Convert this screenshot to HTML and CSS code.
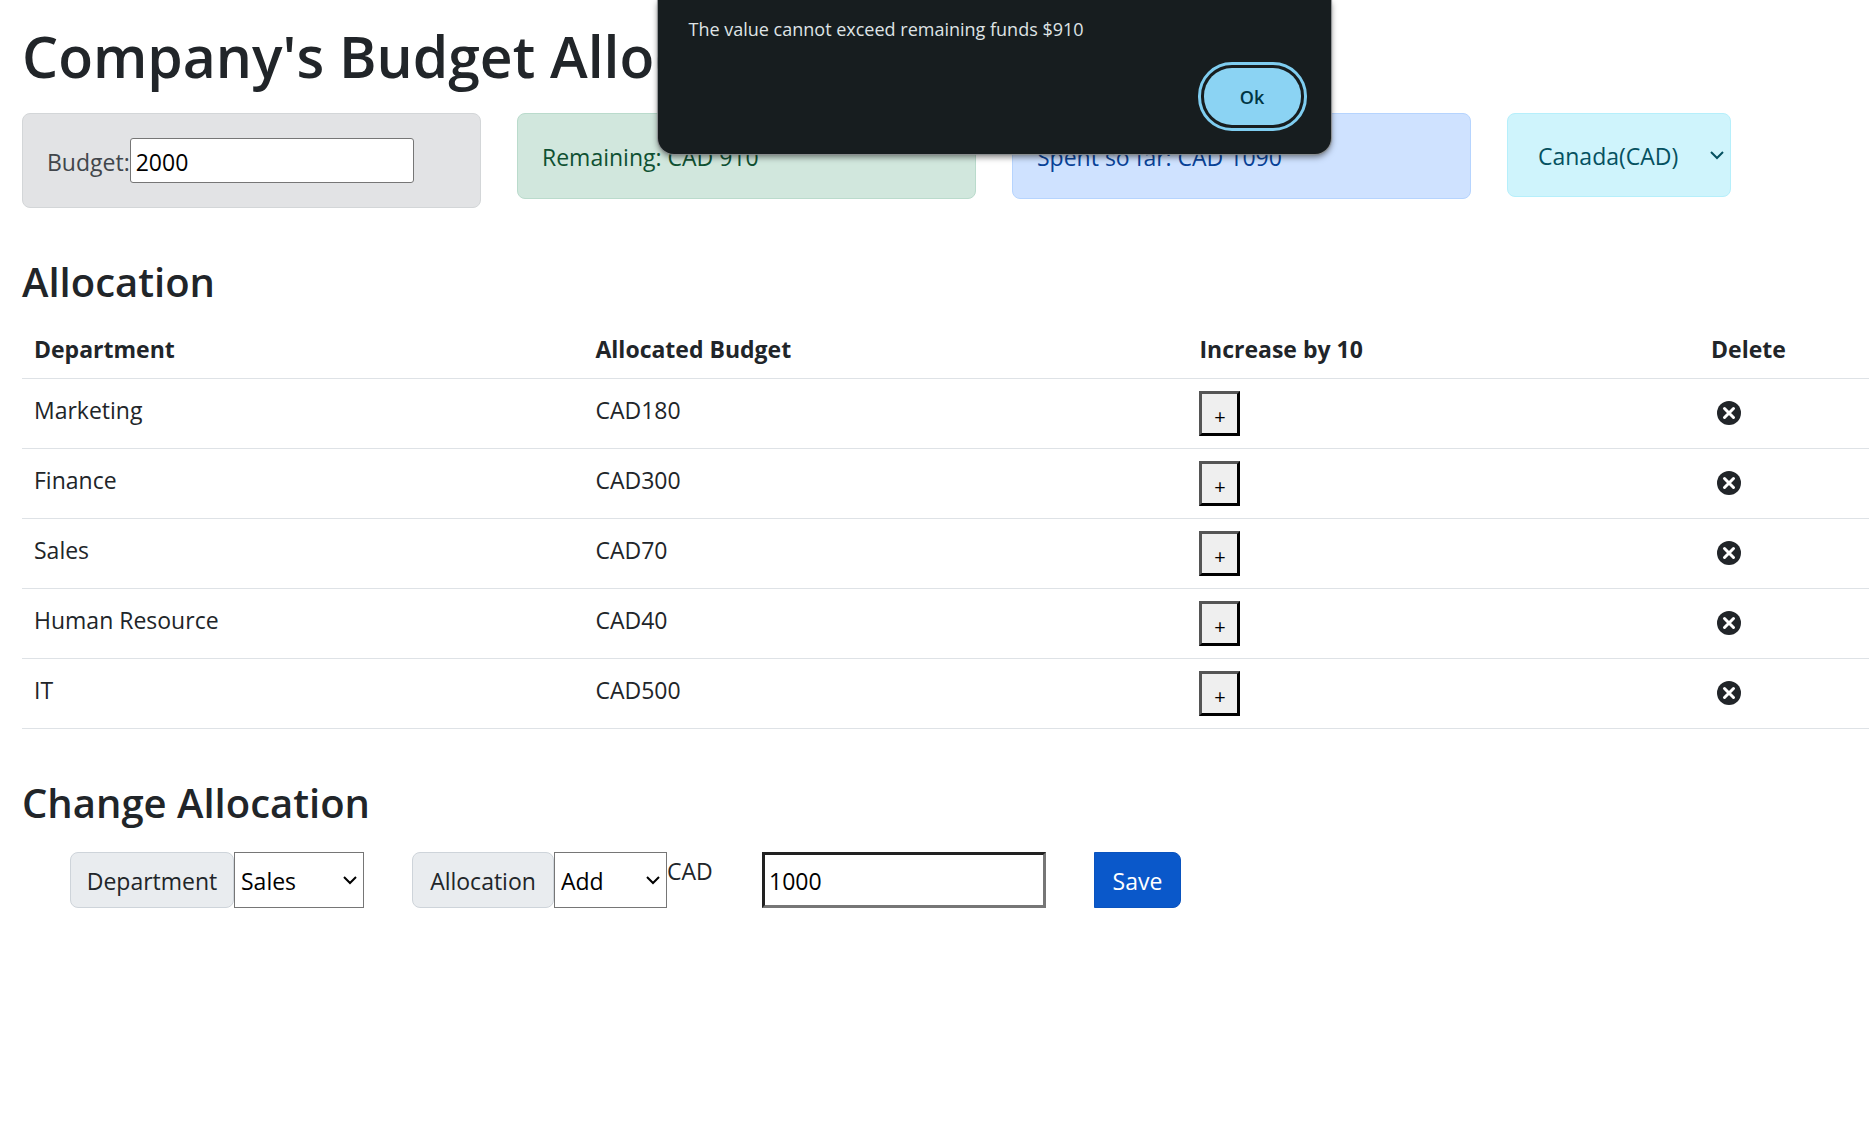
FILE: index.html
```html
<!DOCTYPE html>
<html lang="en">
<head>
<meta charset="utf-8">
<meta name="viewport" content="width=device-width, initial-scale=1">
<title>Company's Budget Allocation</title>
<link rel="stylesheet" href="styles.css">
</head>
<body>
<svg class="defs" aria-hidden="true">
  <symbol id="delete" viewBox="0 0 24 24">
    <circle cx="12" cy="12" r="8" fill="currentColor"/>
    <path d="M9 9l6 6M15 9l-6 6" fill="none" stroke="#fff" stroke-width="2" stroke-linecap="round"/>
  </symbol>
</svg>
<main class="container">
  <h1>Company's Budget Allocation</h1>
  <section class="summary">
    <div class="alert alert-secondary">
      <label class="budget-label" for="budget">Budget:</label><input class="budget-input" id="budget" type="text" inputmode="numeric" value="2000">
    </div>
    <div class="alert alert-success">Remaining: CAD 910</div>
    <div class="alert alert-primary">Spent so far: CAD 1090</div>
    <select class="currency" aria-label="Currency">
      <option>Canada(CAD)</option>
    </select>
  </section>

  <h2>Allocation</h2>
  <table class="table">
    <thead>
      <tr><th class="col-department">Department</th><th class="col-budget">Allocated Budget</th><th class="col-increase">Increase by 10</th><th>Delete</th></tr>
    </thead>
    <tbody>
      <tr><td>Marketing</td><td>CAD180</td><td><button class="increase" type="button">+</button></td><td><button class="delete" type="button" aria-label="Delete Marketing"><svg><use href="#delete"/></svg></button></td></tr>
      <tr><td>Finance</td><td>CAD300</td><td><button class="increase" type="button">+</button></td><td><button class="delete" type="button" aria-label="Delete Finance"><svg><use href="#delete"/></svg></button></td></tr>
      <tr><td>Sales</td><td>CAD70</td><td><button class="increase" type="button">+</button></td><td><button class="delete" type="button" aria-label="Delete Sales"><svg><use href="#delete"/></svg></button></td></tr>
      <tr><td>Human Resource</td><td>CAD40</td><td><button class="increase" type="button">+</button></td><td><button class="delete" type="button" aria-label="Delete Human Resource"><svg><use href="#delete"/></svg></button></td></tr>
      <tr><td>IT</td><td>CAD500</td><td><button class="increase" type="button">+</button></td><td><button class="delete" type="button" aria-label="Delete IT"><svg><use href="#delete"/></svg></button></td></tr>
    </tbody>
  </table>

  <h2>Change Allocation</h2>
  <form class="change">
    <div class="group">
      <label class="group-label group-department" for="department">Department</label>
      <select class="group-select select-department" id="department"><option>Sales</option></select>
    </div>
    <div class="group">
      <label class="group-label group-action" for="action">Allocation</label>
      <select class="group-select select-action" id="action"><option>Add</option></select>
      <label class="unit" for="cost">CAD</label>
      <input class="cost" id="cost" type="text" inputmode="numeric" value="1000">
    </div>
    <button class="save" type="button">Save</button>
  </form>
</main>
<div class="dialog" role="alertdialog" aria-labelledby="message">
  <p class="message" id="message">The value cannot exceed remaining funds $910</p>
  <button class="ok" type="button">Ok</button>
</div>
</body>
</html>
```
FILE: styles.css
```css
* {
  box-sizing: border-box;
}

body {
  margin: 0;
  color: #212529;
  background: #fff;
  font: 23px/36px "Open Sans", "Noto Sans", sans-serif;
}

button,
input,
select {
  margin: 0;
  font: inherit;
}

.defs {
  position: absolute;
  width: 0;
  height: 0;
}

.container {
  padding: 20px 0 0 22px;
}

h1,
h2 {
  margin: 0;
  font-weight: 600;
}

h1 {
  margin-bottom: 21px;
  font-size: 57px;
  line-height: 72px;
}

h2 {
  margin: 45px 0 8px;
  font-size: 40px;
  line-height: 58px;
}

.summary {
  display: grid;
  grid-template-columns: 459fr 459fr 459fr 362fr;
  align-items: start;
  gap: 36px;
}

.alert {
  padding: 25px 24px 23px;
  border: 1px solid;
  border-radius: 8px;
}

.alert-secondary {
  display: flex;
  align-items: center;
  padding: 24px;
  color: #41464b;
  background: #e2e3e5;
  border-color: #d3d6d8;
}

.alert-success {
  color: #0f5132;
  background: #d1e7dd;
  border-color: #badbcc;
}

.alert-primary {
  color: #084298;
  background: #cfe2ff;
  border-color: #b6d4fe;
}

.budget-label {
  padding-top: 2px;
}

.budget-input {
  width: 284px;
  height: 45px;
  padding: 2px 5px 0;
  color: #000;
  background: #fff;
  border: 1px solid #767676;
  border-radius: 3px;
}

select {
  appearance: none;
  background-repeat: no-repeat;
}

.currency {
  justify-self: start;
  width: 224px;
  height: 84px;
  padding: 2px 30px 0;
  color: #055160;
  background-color: #cff4fc;
  background-image: url("data:image/svg+xml,%3Csvg xmlns='http://www.w3.org/2000/svg' width='14' height='9'%3E%3Cpath d='M1 1l6 6 6-6' fill='none' stroke='%23055160' stroke-width='2'/%3E%3C/svg%3E");
  background-position: right 6px center;
  border: 1px solid #b6effb;
  border-radius: 8px;
}

.table {
  width: 100%;
  table-layout: fixed;
  border-collapse: collapse;
}

.table th,
.table td {
  padding: 12px 12px 11px;
  text-align: left;
  vertical-align: top;
  border-bottom: 1px solid #dee2e6;
  line-height: 36px;
}

.table td {
  height: 70px;
  line-height: 38px;
}

.col-department {
  width: 30.4%;
}

.col-budget {
  width: 32.7%;
}

.col-increase {
  width: 27.7%;
}

.increase {
  display: block;
  width: 41px;
  height: 45px;
  padding: 6px 0 0;
  color: #000;
  background: #efefef;
  border: 3px solid;
  border-color: #555 #000 #000 #555;
  font-size: 20px;
  line-height: 30px;
}

.delete {
  display: block;
  padding: 4px 0 0;
  color: inherit;
  background: none;
  border: 0;
}

.delete svg {
  display: block;
  width: 36px;
  height: 36px;
}

.change {
  display: flex;
  gap: 48px;
  padding: 12px 0 0 48px;
}

.group {
  display: flex;
  height: 56px;
}

.group-label {
  display: flex;
  align-items: center;
  justify-content: center;
  padding-top: 2px;
  background: #e9ecef;
  border: 1px solid #ced4da;
  border-radius: 8px;
}

.group-department {
  width: 164px;
}

.group-action {
  width: 142px;
}

.group-select {
  padding: 2px 6px 0;
  color: #000;
  background-color: #fff;
  background-image: url("data:image/svg+xml,%3Csvg xmlns='http://www.w3.org/2000/svg' width='14' height='9'%3E%3Cpath d='M1 1l6 6 6-6' fill='none' stroke='%23000' stroke-width='2'/%3E%3C/svg%3E");
  background-position: right 6px center;
  border: 1px solid #767676;
  border-radius: 0;
}

.select-department {
  width: 130px;
}

.select-action {
  width: 113px;
}

.unit {
  width: 95px;
  line-height: 38px;
}

.cost {
  width: 284px;
  padding: 2px 4px 0;
  color: #000;
  background: #fff;
  border: 3px solid;
  border-color: #212121 #767676 #767676 #212121;
}

.save {
  width: 87px;
  height: 56px;
  padding: 2px 0 0;
  color: #fff;
  background: #0a58ca;
  border: 1px solid #0a53be;
  border-radius: 0 8px 8px 0;
}

.dialog {
  position: absolute;
  top: 0;
  left: calc(50% - 277px);
  display: flex;
  flex-direction: column;
  width: 673px;
  height: 154px;
  padding: 14px 30px 0 31px;
  color: #dfe3e5;
  background: #171d1f;
  border-radius: 0 0 16px 16px;
  box-shadow: 0 0 1px 1px #8a8d8f, 0 3px 6px rgba(0, 0, 0, 0.5);
}

.message {
  margin: 0 0 24px;
  font-size: 18px;
  line-height: 30px;
}

.ok {
  align-self: flex-end;
  width: 97px;
  height: 57px;
  padding: 0;
  color: #003543;
  background: #8bd3f3;
  border: 0;
  border-radius: 28px;
  outline: 3px solid #7fcdf0;
  outline-offset: 3px;
  font-size: 18px;
  font-weight: 600;
}
```
